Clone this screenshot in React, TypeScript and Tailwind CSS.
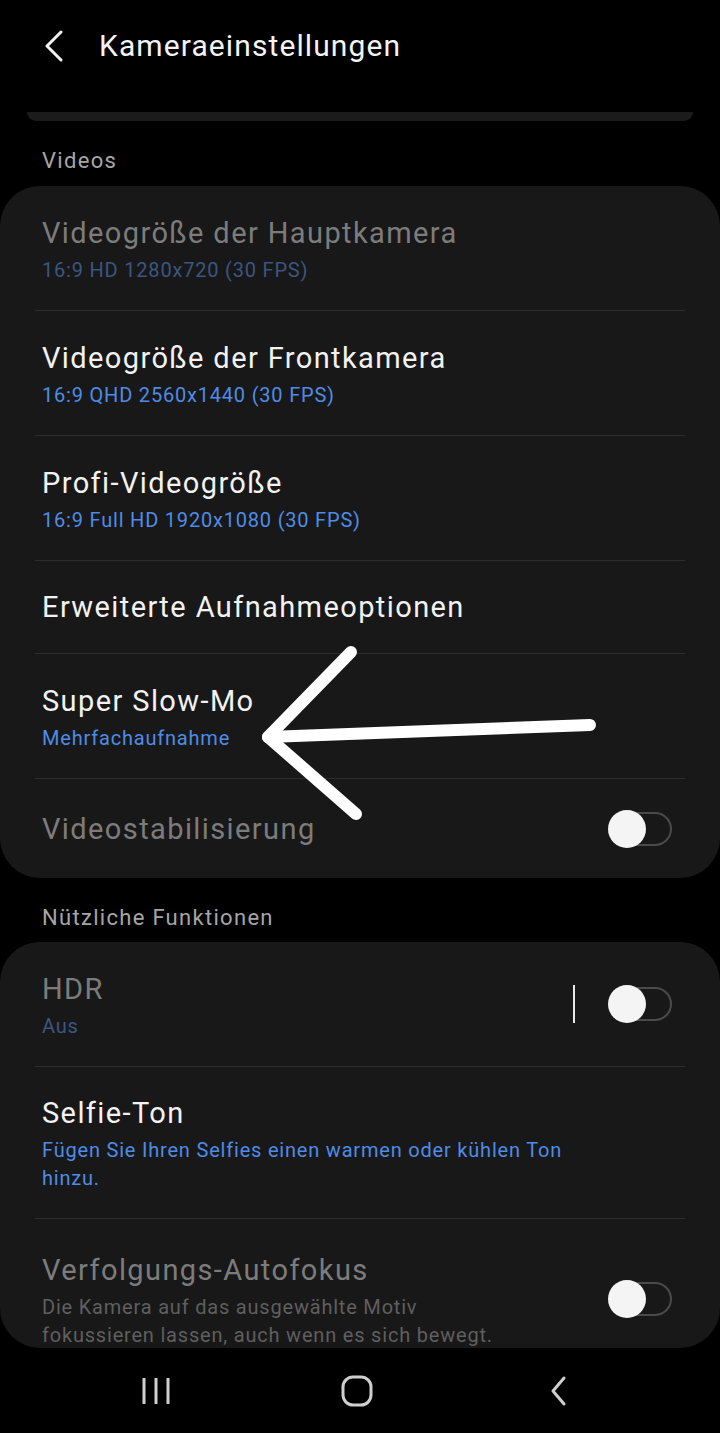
import React from 'react';

type Row = {
  title: string;
  sub?: string;
  subLines?: string[];
  disabled?: boolean;
  toggle?: boolean;
  cursor?: boolean;
  height: string;
  last?: boolean;
  desc?: boolean;
};

const videoRows: Row[] = [
  { title: 'Videogröße der Hauptkamera', sub: '16:9 HD 1280x720 (30 FPS)', disabled: true, height: 'h-[125px]' },
  { title: 'Videogröße der Frontkamera', sub: '16:9 QHD 2560x1440 (30 FPS)', height: 'h-[125px]' },
  { title: 'Profi-Videogröße', sub: '16:9 Full HD 1920x1080 (30 FPS)', height: 'h-[125px]' },
  { title: 'Erweiterte Aufnahmeoptionen', height: 'h-[93px]' },
  { title: 'Super Slow-Mo', sub: 'Mehrfachaufnahme', height: 'h-[125px]' },
  { title: 'Videostabilisierung', disabled: true, toggle: true, height: 'h-[99px]', last: true },
];

const usefulRows: Row[] = [
  { title: 'HDR', sub: 'Aus', disabled: true, toggle: true, cursor: true, height: 'h-[125px]' },
  {
    title: 'Selfie-Ton',
    subLines: ['Fügen Sie Ihren Selfies einen warmen oder kühlen Ton', 'hinzu.'],
    height: 'h-[152px]',
  },
  {
    title: 'Verfolgungs-Autofokus',
    subLines: ['Die Kamera auf das ausgewählte Motiv', 'fokussieren lassen, auch wenn es sich bewegt.'],
    disabled: true,
    toggle: true,
    desc: true,
    height: 'h-[160px]',
    last: true,
  },
];

function Toggle() {
  return (
    <div className="relative w-[64px] h-[38px] shrink-0">
      <div className="absolute left-[4px] right-0 top-[2px] bottom-[2px] rounded-full border-2 border-[#4a4a4a]" />
      <div className="absolute left-0 top-0 w-[38px] h-[38px] rounded-full bg-[#f4f4f4]" />
    </div>
  );
}

function SettingRow({ row }: { row: Row }) {
  const titleColor = row.disabled ? 'text-[#7c7c7c]' : 'text-[#f2f2f2]';
  const subColor = row.desc
    ? 'text-[#5f5f5f]'
    : row.disabled
      ? 'text-[#3b5680]'
      : 'text-[#4f8ce6]';
  const lines = row.subLines ?? (row.sub ? [row.sub] : []);
  return (
    <div className={`mx-[35px] ${row.height} ${row.last ? '' : 'border-b border-[#2c2c2c]'} flex items-center pl-[7px] pr-[13px] shrink-0`}>
      <div className="flex-1 flex flex-col">
        <div className={`text-[29px] leading-[40px] tracking-[1.4px] ${titleColor}`}>{row.title}</div>
        {lines.length > 0 && (
          <div className={`mt-[3px] text-[20px] leading-[28px] tracking-[0.8px] ${subColor}`}>
            {lines.map((l) => (
              <div key={l}>{l}</div>
            ))}
          </div>
        )}
      </div>
      {row.cursor && <div className="w-[2px] h-[38px] bg-[#e8e8e8] mr-[33px]" />}
      {row.toggle && <Toggle />}
    </div>
  );
}

export default function App() {
  return (
    <div
      className="relative w-[720px] h-[1433px] bg-black overflow-hidden flex flex-col"
      style={{ fontFamily: 'Roboto, "Noto Sans", sans-serif' }}
    >
      {/* Header */}
      <div className="h-[92px] flex items-center shrink-0">
        <svg className="ml-[44px]" width="20" height="32" viewBox="0 0 20 32" fill="none" stroke="#f2f2f2" strokeWidth="3" strokeLinecap="round" strokeLinejoin="round">
          <path d="M17 2 L3 16 L17 30" />
        </svg>
        <div className="ml-[35px] text-[30px] tracking-[1.1px] text-[#f4f4f4] -mt-[2px]">Kameraeinstellungen</div>
      </div>

      {/* scrolled-away card edge */}
      <div className="mx-[27px] h-[9px] rounded-b-full bg-[#1b1b1b] mt-[20px] shrink-0" />

      <div className="h-[65px] flex items-center pt-[14px] pl-[42px] text-[22px] tracking-[1.3px] text-[#a6a6a6] shrink-0">Videos</div>

      <div className="rounded-[40px] bg-[#181818] flex flex-col shrink-0">
        {videoRows.map((r) => (
          <SettingRow key={r.title} row={r} />
        ))}
      </div>

      <div className="h-[64px] flex items-center pt-[14px] pl-[42px] text-[22px] tracking-[1.3px] text-[#a6a6a6] shrink-0">Nützliche Funktionen</div>

      <div className="rounded-[40px] bg-[#181818] h-[406px] overflow-hidden flex flex-col shrink-0">
        {usefulRows.map((r) => (
          <SettingRow key={r.title} row={r} />
        ))}
      </div>

      {/* Navigation bar */}
      <div className="flex-1 flex items-center pl-[126px] gap-[141px]">
        <div className="w-[60px] flex justify-center">
          <svg width="30" height="30" viewBox="0 0 30 30" fill="none" stroke="#cfcfcf" strokeWidth="3">
            <path d="M3 2 V28 M15 2 V28 M27 2 V28" />
          </svg>
        </div>
        <div className="w-[60px] flex justify-center">
          <svg width="32" height="32" viewBox="0 0 32 32" fill="none" stroke="#cfcfcf" strokeWidth="3">
            <rect x="2" y="2" width="28" height="28" rx="10" />
          </svg>
        </div>
        <div className="w-[60px] flex justify-center">
          <svg width="20" height="32" viewBox="0 0 20 32" fill="none" stroke="#cfcfcf" strokeWidth="3" strokeLinecap="round" strokeLinejoin="round">
            <path d="M16 3 L5 16 L16 29" />
          </svg>
        </div>
      </div>

      {/* Annotation arrow */}
      <svg className="absolute left-0 top-0 pointer-events-none" width="720" height="1433" viewBox="0 0 720 1433" fill="none" stroke="#ffffff" strokeWidth="12" strokeLinecap="round" strokeLinejoin="round">
        <path d="M590 725 L268 737" />
        <path d="M351 652 L268 737 L356 814" />
      </svg>
    </div>
  );
}
